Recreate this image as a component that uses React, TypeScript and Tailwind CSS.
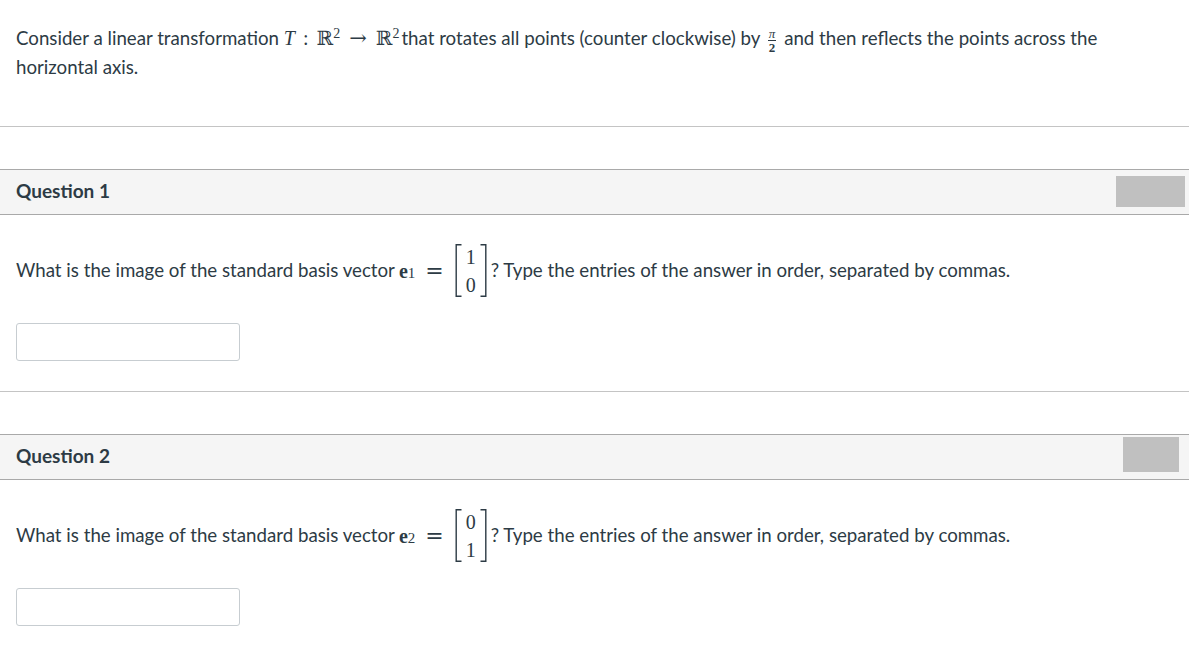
const math = "font-['Liberation_Serif','DejaVu_Serif',serif]";
const sym = "font-['DejaVu_Serif','Liberation_Serif',serif]";

const Bracket = ({ side }: { side: "l" | "r" }) => (
  <svg width="7" height="53" viewBox="0 0 7 53" className="shrink-0">
    {side === "l" ? (
      <path d="M6.5 0.7 H1.2 V52.3 H6.5" fill="none" stroke="#2d3b45" strokeWidth="1.4" />
    ) : (
      <path d="M0.5 0.7 H5.8 V52.3 H0.5" fill="none" stroke="#2d3b45" strokeWidth="1.4" />
    )}
  </svg>
);

const Vector = ({ top, bottom }: { top: string; bottom: string }) => (
  <span className="inline-flex items-center ml-[11px] mr-[4px]">
    <Bracket side="l" />
    <span className={`${math} flex flex-col items-center px-[4px] text-[20px] leading-[28px]`}>
      <span>{top}</span>
      <span>{bottom}</span>
    </span>
    <Bracket side="r" />
  </span>
);

const Question = ({ n, top, bottom, box }: { n: number; top: string; bottom: string; box: string }) => (
  <div>
    <div className="flex items-start justify-between h-[46px] bg-[#f5f5f5] border-y border-[#a9a9a9]">
      <div className="pl-4 pt-[7px] text-[19px] font-bold">Question {n}</div>
      <div className={box} />
    </div>
    <div className="pl-4 pt-[25px] flex items-center h-[86px]">
      <span>What is the image of the standard basis vector</span>
      <span className={`${math} ml-[4px] text-[20px] flex items-center`}>
        <b>e</b>
        <span className="relative top-[3px] text-[15px]">{n}</span>
        <span className={`${sym} ml-[10px] text-[22px]`}>=</span>
      </span>
      <Vector top={top} bottom={bottom} />
      <span>? Type the entries of the answer in order, separated by commas.</span>
    </div>
    <div className="pl-4 pt-[22px]">
      <div className="w-[224px] h-[38px] border border-[#c7cdd1] rounded-[3px] bg-white" />
    </div>
  </div>
);

export default function App() {
  return (
    <div className="min-h-screen bg-white text-[#2d3b45] text-[18.7px] font-['Lato','Liberation_Sans',sans-serif]">
      <div className="pl-4 pt-[24px] pr-20 leading-[29px]">
        Consider a linear transformation{" "}
        <span className={`${math} text-[20px]`}>
          <i>T</i>
          <span className="mx-[8px]">:</span>ℝ<sup className="text-[14px]">2</sup>
          <span className={`${sym} mx-[9px] text-[21px]`}>→</span>ℝ<sup className="text-[14px] mr-[2px]">2</sup>
        </span>
        that rotates all points (counter clockwise) by{" "}
        <span className={`${math} inline-flex flex-col items-center align-middle text-[13px] leading-[11px] mx-[3px]`}>
          <i className="border-b border-[#2d3b45] px-[1px] pb-[1px]">π</i>
          <b className="pt-[1px]">2</b>
        </span>{" "}
        and then reflects the points across the horizontal axis.
      </div>
      <div className="mt-[44px] border-t border-[#c4c4c4]" />
      <div className="mt-[42px]">
        <Question n={1} top="1" bottom="0" box="w-[69px] h-[31px] mt-[6px] mr-[4px] bg-[#c0c0c0]" />
      </div>
      <div className="mt-[30px] border-t border-[#c4c4c4]" />
      <div className="mt-[42px]">
        <Question n={2} top="0" bottom="1" box="w-[56px] h-[35px] mt-[2px] mr-[10px] bg-[#c0c0c0]" />
      </div>
    </div>
  );
}
